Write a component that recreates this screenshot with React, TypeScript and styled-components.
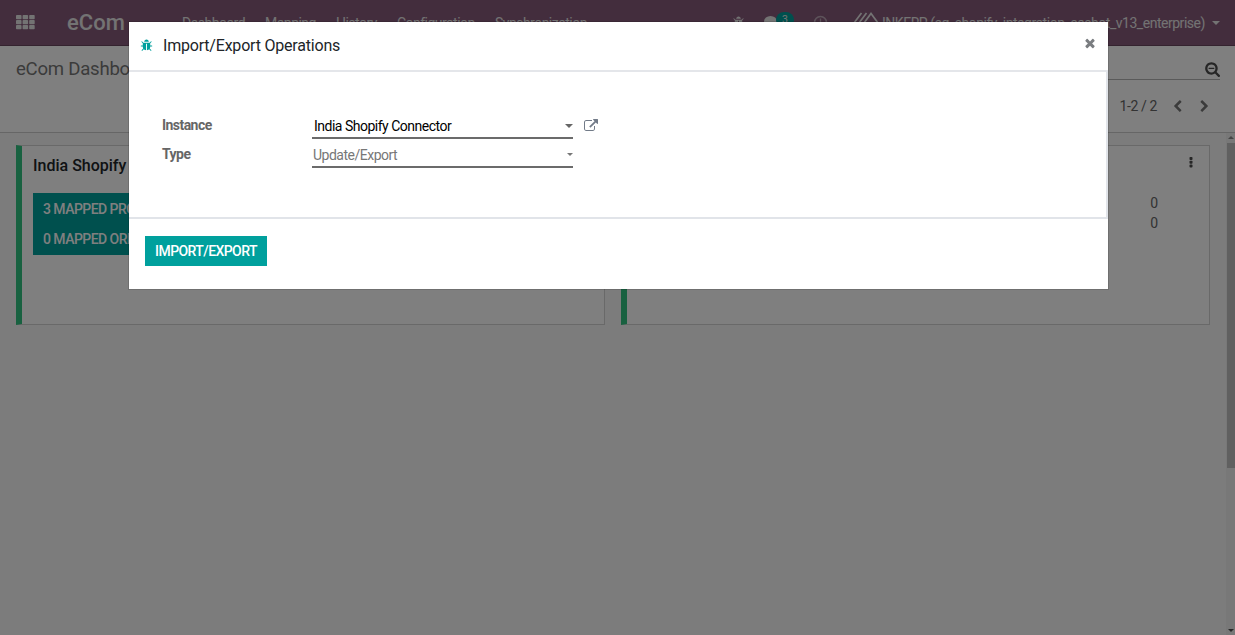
import React from 'react';
import styled, { createGlobalStyle } from 'styled-components';

const GlobalStyle = createGlobalStyle`
  * { box-sizing: border-box; }
  body {
    margin: 0;
    overflow: hidden;
    font-family: Roboto, "Liberation Sans", sans-serif;
    font-size: 14px;
    line-height: 20px;
    color: #4c4c4c;
  }
`;

const paths = {
  bug: 'M1696 960q0 26-19 45t-45 19h-224q0 171-67 290l208 209q19 19 19 45t-19 45q-18 19-45 19t-45-19l-198-197q-5 5-15 13t-42 28.5-65 36.5-82 29-97 13v-896h-128v896q-51 0-101.5-13.5t-87-33-66-39-43.5-32.5l-15-14-183 207q-20 21-48 21-24 0-43-16-19-18-20.5-44.5t15.5-46.5l202-227q-58-114-58-274h-224q-26 0-45-19t-19-45 19-45 45-19h224v-294l-173-173q-19-19-19-45t19-45 45-19 45 19l173 173h844l173-173q19-19 45-19t45 19 19 45-19 45l-173 173v294h224q26 0 45 19t19 45zm-480-576h-640q0-133 93.5-226.5t226.5-93.5 226.5 93.5 93.5 226.5z',
  external: 'M1408 928v320q0 119-84.5 203.5t-203.5 84.5h-832q-119 0-203.5-84.5t-84.5-203.5v-832q0-119 84.5-203.5t203.5-84.5h704q14 0 23 9t9 23v64q0 14-9 23t-23 9h-704q-66 0-113 47t-47 113v832q0 66 47 113t113 47h832q66 0 113-47t47-113v-320q0-14 9-23t23-9h64q14 0 23 9t9 23zm384-864v512q0 26-19 45t-45 19-45-19l-176-176-652 652q-10 10-23 10t-23-10l-114-114q-10-10-10-23t10-23l652-652-176-176q-19-19-19-45t19-45 45-19h512q26 0 45 19t19 45z',
  times: 'M1490 1322q0 40-28 68l-136 136q-28 28-68 28t-68-28l-294-294-294 294q-28 28-68 28t-68-28l-136-136q-28-28-28-68t28-68l294-294-294-294q-28-28-28-68t28-68l136-136q28-28 68-28t68 28l294 294 294-294q28-28 68-28t68 28l136 136q28 28 28 68t-28 68l-294 294 294 294q28 28 28 68z',
  searchMinus: 'M1152 800v64q0 13-9.5 22.5t-22.5 9.5h-576q-13 0-22.5-9.5t-9.5-22.5v-64q0-13 9.5-22.5t22.5-9.5h576q13 0 22.5 9.5t9.5 22.5zm128 32q0-185-131.5-316.5t-316.5-131.5-316.5 131.5-131.5 316.5 131.5 316.5 316.5 131.5 316.5-131.5 131.5-316.5zm512 832q0 53-37.5 90.5t-90.5 37.5q-54 0-90-38l-343-342q-179 124-399 124-143 0-273.5-55.5t-225-150-150-225-55.5-273.5 55.5-273.5 150-225 225-150 273.5-55.5 273.5 55.5 225 150 150 225 55.5 273.5q0 220-124 399l343 343q37 37 37 90z',
  left: 'M1427 301l-531 531 531 531q19 19 19 45t-19 45l-166 166q-19 19-45 19t-45-19l-742-742q-19-19-19-45t19-45l742-742q19-19 45-19t45 19l166 166q19 19 19 45t-19 45z',
  right: 'M1363 877l-742 742q-19 19-45 19t-45-19l-166-166q-19-19-19-45t19-45l531-531-531-531q-19-19-19-45t19-45l166-166q19-19 45-19t45 19l742 742q19 19 19 45t-19 45z',
};

const Svg = styled.svg`
  display: block;
  flex: none;
  fill: currentColor;
`;

const Icon = ({ name, size }: { name: keyof typeof paths; size: number }) => (
  <Svg width={size} height={size} viewBox="0 0 1792 1792"><path d={paths[name]} /></Svg>
);

const Caret = styled.span<{ $size?: number }>`
  flex: none;
  border: ${p => p.$size ?? 4}px solid transparent;
  border-top-color: currentColor;
  border-bottom: 0;
`;

const Page = styled.div`
  position: relative;
  display: flex;
  flex-direction: column;
  width: 1235px;
  height: 635px;
  overflow: hidden;
  background: #fff;
`;

const Navbar = styled.header`
  flex: none;
  display: flex;
  align-items: center;
  height: 46px;
  padding: 0 15px 0 16px;
  background: #875a7b;
  border-bottom: 1px solid #68465f;
  color: #e6e6e6;
  white-space: nowrap;
`;

const Brand = styled.div`
  width: 115px;
  padding-left: 32px;
  box-sizing: content-box;
  font-size: 22px;
  font-weight: 500;
`;

const Menu = styled.nav`
  display: flex;
  gap: 20px;
  flex: 1;
  min-width: 0;
  letter-spacing: -0.52px;
`;

const MenuItem = styled.span<{ $width: number }>`
  flex: none;
  width: ${p => p.$width}px;
`;

const Systray = styled.div`
  flex: none;
  display: flex;
  align-items: center;
`;

const Chat = styled.div`
  position: relative;
  width: 34px;
  margin-left: 19px;
`;

const Badge = styled.span`
  position: absolute;
  left: 12px;
  top: -4px;
  width: 18px;
  height: 16px;
  border-radius: 8px;
  background: #00a09d;
  font-size: 10.5px;
  line-height: 16px;
  text-align: center;
`;

const Clock = styled.div`
  margin-left: 15px;
`;

const User = styled.div`
  display: flex;
  align-items: center;
  margin-left: 25px;
`;

const UserName = styled.span`
  width: 323px;
  margin: 0 7px 0 3px;
  letter-spacing: -0.475px;
`;

const ControlPanel = styled.section`
  flex: none;
  display: flex;
  justify-content: space-between;
  height: 87px;
  padding: 0 15px 0 16px;
  border-bottom: 1px solid #ccc;
`;

const Title = styled.h1`
  margin: 13px 0 0;
  font-size: 18.6px;
  font-weight: 400;
  letter-spacing: -0.25px;
  color: #777;
`;

const SearchArea = styled.div`
  width: 600px;
`;

const Search = styled.div`
  display: flex;
  align-items: center;
  justify-content: flex-end;
  height: 34px;
  padding-top: 12px;
  border-bottom: 1px solid #b4b4b4;
`;

const Pager = styled.div`
  display: flex;
  align-items: center;
  justify-content: flex-end;
  height: 20px;
  margin-top: 16px;
  padding-right: 9px;
  gap: 14px;
  color: #777;
`;

const Range = styled.span`
  letter-spacing: -0.4px;
  color: #666;
`;

const Content = styled.main`
  flex: 1;
  display: flex;
  background: #f9f9f9;
`;

const Kanban = styled.div`
  flex: 1;
  display: grid;
  grid-template-columns: 589px 589px;
  grid-template-rows: 180px;
  gap: 16px;
  padding: 12px 0 0 16px;
`;

const Card = styled.article`
  display: flex;
  flex-direction: column;
  padding: 10px 14px 0 11px;
  border: 1px solid #d2d2d2;
  border-left: 6px solid #30c381;
  background: #fff;
`;

const CardRow = styled.div`
  display: flex;
  justify-content: space-between;
`;

const CardTitle = styled.h2`
  margin: 0;
  font-size: 16px;
  font-weight: 500;
  line-height: 20px;
  color: #212529;
`;

const Stats = styled.div`
  width: 260px;
  height: 62px;
  margin-top: 17px;
  background: #00a09d;
  color: #fff;
  font-weight: 500;
  letter-spacing: -0.55px;
  white-space: nowrap;
`;

const Stat = styled.div`
  height: 30px;
  padding-left: 10px;
  line-height: 32px;
`;

const Counts = styled.div`
  margin: 17px 37px 0 0;
  line-height: 20px;
  color: #666;
`;

const Dots = styled.div`
  color: #4c4c4c;
`;

const Scrollbar = styled.div`
  display: flex;
  flex-direction: column;
  align-items: flex-end;
  width: 9px;
  background: #f1f1f1;
`;

const Arrow = styled.div<{ $down?: boolean }>`
  display: flex;
  align-items: center;
  justify-content: center;
  width: 8px;
  height: 10px;
  color: ${p => (p.$down ? '#505050' : '#8a8a8a')};
  transform: ${p => (p.$down ? 'none' : 'rotate(180deg)')};
`;

const Thumb = styled.div`
  width: 8px;
  height: 325px;
  margin-bottom: auto;
  background: #c1c1c1;
`;

const Backdrop = styled.div`
  position: absolute;
  inset: 0;
  padding: 22px 127.5px 0 129px;
  background: rgba(0, 0, 0, 0.5);
`;

const Dialog = styled.div`
  height: 267px;
  background: #fff;
  box-shadow: 0 0 0 1px rgba(0, 0, 0, 0.12);
`;

const DialogHeader = styled.header`
  display: flex;
  align-items: center;
  height: 48px;
  padding: 0 12px 1px 11px;
  color: #00a09d;
`;

const DialogTitle = styled.h4`
  flex: 1;
  margin: 0 0 0 10px;
  font-size: 16px;
  font-weight: 400;
  letter-spacing: -0.2px;
  color: #212529;
`;

const Close = styled.button`
  display: flex;
  margin: 0 -1px 5px 0;
  padding: 0;
  border: 0;
  background: none;
  color: #7a7d80;
`;

const DialogBody = styled.div`
  height: 149px;
  padding: 44px 33px 0;
  border: solid #e1e4e9;
  border-width: 2px 2px 2px 0;
  border-top-color: #e4e6ea;
`;

const Field = styled.div`
  display: flex;
  align-items: flex-start;
  height: 29px;
`;

const Label = styled.label`
  width: 150px;
  font-weight: 700;
  letter-spacing: -0.55px;
  line-height: 18px;
  color: #666;
`;

const Select = styled.div<{ $muted?: boolean }>`
  display: flex;
  align-items: center;
  justify-content: space-between;
  width: 261px;
  height: 23px;
  padding: ${p => (p.$muted ? '0 0 2px 1px' : '0 0 2px 2px')};
  border-bottom: 2px solid #6b6b6b;
  letter-spacing: -0.5px;
  color: ${p => (p.$muted ? '#777' : '#000')};
`;

const Indicator = styled.span<{ $muted?: boolean }>`
  display: flex;
  color: ${p => (p.$muted ? '#777' : '#666')};
`;

const OpenLink = styled.span`
  margin: 3px 0 0 11px;
  color: #727b88;
`;

const DialogFooter = styled.footer`
  padding: 17px 16px;
`;

const Primary = styled.button`
  width: 122px;
  height: 30px;
  padding: 0;
  border: 0;
  background: #00a09d;
  color: #fff;
  font: 500 14px Roboto, sans-serif;
  letter-spacing: -0.58px;
`;

const menuItems: [string, number][] = [
  ['Dashboard', 63], ['Mapping', 51], ['History', 41], ['Configuration', 78], ['Synchronization', 94],
];

const KanbanCard = ({ title }: { title: string }) => (
  <Card>
    <CardRow>
      <CardTitle>{title}</CardTitle>
      <Dots>
        <Svg width="8" height="14" viewBox="0 0 8 14">
          <rect x="2.5" y="1" width="3" height="3" rx=".8" />
          <rect x="2.5" y="4.8" width="3" height="3" rx=".8" />
          <rect x="2.5" y="8.6" width="3" height="3" rx=".8" />
        </Svg>
      </Dots>
    </CardRow>
    <CardRow>
      <Stats>
        <Stat>3 MAPPED PRODUCTS</Stat>
        <Stat>0 MAPPED ORDERS</Stat>
      </Stats>
      <Counts><div>0</div><div>0</div></Counts>
    </CardRow>
  </Card>
);

export default function App() {
  return (
    <Page>
      <GlobalStyle />
      <Navbar>
        <Svg width="19" height="15" viewBox="0 0 19 15">
          {[0, 5, 10].map(y => [0, 6.6, 13.2].map(x => (
            <rect key={`${x}-${y}`} x={x} y={y} width="5.5" height="4.3" rx=".8" />
          )))}
        </Svg>
        <Brand>eCom</Brand>
        <Menu>
          {menuItems.map(([text, width]) => <MenuItem key={text} $width={width}>{text}</MenuItem>)}
        </Menu>
        <Systray>
          <Icon name="bug" size={13} />
          <Chat>
            <Svg width="14" height="13" viewBox="0 0 14 13">
              <ellipse cx="6.5" cy="5.5" rx="6.5" ry="5.5" />
              <path d="M2 8L1 13L7 10z" />
            </Svg>
            <Badge>3</Badge>
          </Chat>
          <Clock>
            <Svg width="15" height="15" viewBox="0 0 15 15" opacity=".55">
              <circle cx="7.5" cy="7.5" r="6" fill="none" stroke="currentColor" strokeWidth="1.6" />
              <path d="M7.5 3.5V8H5" fill="none" stroke="currentColor" strokeWidth="1.3" />
            </Svg>
          </Clock>
          <User>
            <Svg width="26" height="22" viewBox="0 0 26 22">
              <path d="M1 11L8.5 1M6 11L13.5 1M11 11L18 1.5L25 11" fill="none" stroke="currentColor" strokeWidth="1.7" />
            </Svg>
            <UserName>INKERP (eg_shopify_integration_eashot_v13_enterprise)</UserName>
            <Caret />
          </User>
        </Systray>
      </Navbar>
      <ControlPanel>
        <Title>eCom Dashboard</Title>
        <SearchArea>
          <Search><Icon name="searchMinus" size={16} /></Search>
          <Pager>
            <Range>1-2 / 2</Range>
            <Icon name="left" size={13} />
            <Icon name="right" size={13} />
          </Pager>
        </SearchArea>
      </ControlPanel>
      <Content>
        <Kanban>
          <KanbanCard title="India Shopify Connector" />
          <KanbanCard title="Shopify Connector" />
        </Kanban>
        <Scrollbar>
          <Arrow><Caret $size={3} /></Arrow>
          <Thumb />
          <Arrow $down><Caret $size={3} /></Arrow>
        </Scrollbar>
      </Content>
      <Backdrop>
        <Dialog>
          <DialogHeader>
            <Icon name="bug" size={13} />
            <DialogTitle>Import/Export Operations</DialogTitle>
            <Close aria-label="Close"><Icon name="times" size={14} /></Close>
          </DialogHeader>
          <DialogBody>
            <Field>
              <Label>Instance</Label>
              <Select>India Shopify Connector<Indicator><Caret /></Indicator></Select>
              <OpenLink><Icon name="external" size={14} /></OpenLink>
            </Field>
            <Field>
              <Label>Type</Label>
              <Select $muted>Update/Export<Indicator $muted><Caret $size={3} /></Indicator></Select>
            </Field>
          </DialogBody>
          <DialogFooter><Primary>IMPORT/EXPORT</Primary></DialogFooter>
        </Dialog>
      </Backdrop>
    </Page>
  );
}
